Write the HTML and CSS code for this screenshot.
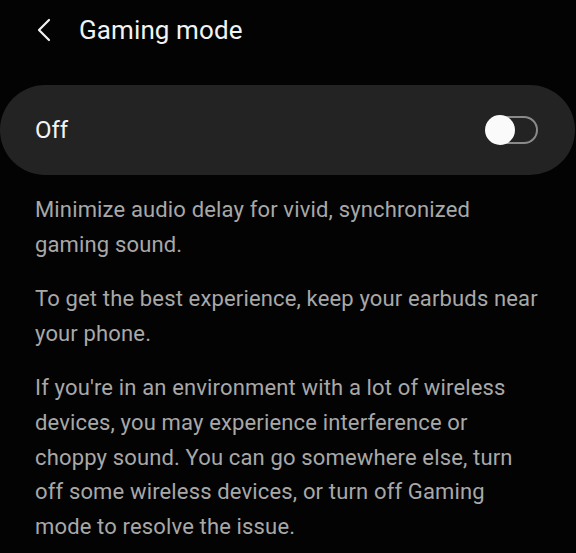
FILE: index.html
```html
<!DOCTYPE html>
<html>
<head>
<meta charset="utf-8">
<link rel="stylesheet" href="styles.css">
</head>
<body>
<div class="screen">
  <header class="topbar">
    <span class="back">
      <svg width="16" height="24" viewBox="0 0 16 24"><path d="M13 2 L3 12 L13 22" fill="none" stroke="#f2f2f2" stroke-width="2.2" stroke-linecap="round" stroke-linejoin="round"/></svg>
    </span>
    <h1 class="title">Gaming mode</h1>
  </header>
  <div class="card">
    <span class="card-label">Off</span>
    <span class="switch"><span class="knob"></span></span>
  </div>
  <div class="desc">
    <p>Minimize audio delay for vivid, synchronized gaming sound.</p>
    <p>To get the best experience, keep your earbuds near your phone.</p>
    <p>If you're in an environment with a lot of wireless devices, you may experience interference or choppy sound. You can go somewhere else, turn off some wireless devices, or turn off Gaming mode to resolve the issue.</p>
  </div>
</div>
</body>
</html>
```
FILE: styles.css
```css
html, body {
  margin: 0;
  padding: 0;
  background: #030303;
}
body {
  font-family: Roboto, "Noto Sans", sans-serif;
  width: 576px;
  height: 553px;
  overflow: hidden;
}
.screen {
  display: flex;
  flex-direction: column;
}
.topbar {
  display: flex;
  align-items: center;
  height: 60px;
  padding-left: 36px;
  gap: 27px;
}
.back {
  display: flex;
}
.title {
  margin: 0;
  font-weight: 400;
  font-size: 26px;
  color: #f2f2f2;
  letter-spacing: 0.1px;
}
.card {
  margin: 25px 1px 0 0;
  height: 90px;
  background: #232323;
  border-radius: 45px;
  display: flex;
  align-items: center;
  justify-content: space-between;
  padding: 0 37px 0 35px;
}
.card-label {
  font-size: 24px;
  color: #f4f4f4;
}
.switch {
  position: relative;
  width: 47px;
  height: 24px;
  border: 2px solid #8a8a8a;
  border-radius: 14px;
  box-sizing: content-box;
}
.knob {
  position: absolute;
  left: -4px;
  top: -3px;
  width: 30px;
  height: 30px;
  border-radius: 50%;
  background: #fafafa;
}
.desc {
  padding: 18px 37px 0 35px;
}
.desc p {
  margin: 0 0 20px;
  font-size: 22px;
  line-height: 34.6px;
  letter-spacing: 0.15px;
  color: #a8a8a8;
}
```
